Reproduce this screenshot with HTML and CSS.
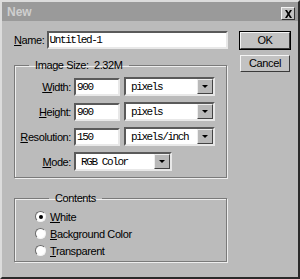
FILE: index.html
```html
<!DOCTYPE html>
<html lang="en">
<head>
    <meta charset="UTF-8">
    <title>New</title>
    <link rel="stylesheet" href="styles.css">
</head>
<body>
    <div class="dialog">
        <div class="titlebar">
            <span class="title">New</span>
            <span class="close">
                <svg width="9" height="8" viewBox="0 0 9 8"><path d="M1 0h2l1.5 2.5L6 0h2L5.5 4 8 8H6L4.5 5.5 3 8H1l2.5-4z" fill="#000"/></svg>
            </span>
        </div>
        <div class="body">
            <div class="main">
                <div class="row name-row">
                    <label class="lbl"><u>N</u>ame:</label>
                    <div class="field name-field">Untitled-1</div>
                </div>
                <fieldset class="group size-group">
                    <legend>Image Size:&nbsp; 2.32M</legend>
                    <div class="row">
                        <label class="lbl right"><u>W</u>idth:</label>
                        <div class="field num">900</div>
                        <div class="select unit"><span>pixels</span><i class="arrow"></i></div>
                    </div>
                    <div class="row">
                        <label class="lbl right"><u>H</u>eight:</label>
                        <div class="field num">900</div>
                        <div class="select unit"><span>pixels</span><i class="arrow"></i></div>
                    </div>
                    <div class="row">
                        <label class="lbl right"><u>R</u>esolution:</label>
                        <div class="field num">150</div>
                        <div class="select unit"><span>pixels/inch</span><i class="arrow"></i></div>
                    </div>
                    <div class="row">
                        <label class="lbl right"><u>M</u>ode:</label>
                        <div class="select mode"><span>RGB Color</span><i class="arrow"></i></div>
                    </div>
                </fieldset>
                <fieldset class="group contents-group">
                    <legend>Contents</legend>
                    <div class="radio"><i class="dot checked"></i><span><u>W</u>hite</span></div>
                    <div class="radio"><i class="dot"></i><span><u>B</u>ackground Color</span></div>
                    <div class="radio"><i class="dot"></i><span><u>T</u>ransparent</span></div>
                </fieldset>
            </div>
            <div class="buttons">
                <div class="btn default">OK</div>
                <div class="btn">Cancel</div>
            </div>
        </div>
    </div>
</body>
</html>
```
FILE: styles.css
```css
body {
    margin: 0;
    background: #bbbbbb;
    font-family: "Liberation Sans", Arial, sans-serif;
    font-size: 11px;
    letter-spacing: -0.4px;
    color: #000;
}
.dialog {
    width: 300px;
    height: 279px;
    box-sizing: border-box;
    background: #bbbbbb;
    border: 2px solid;
    border-color: #dcdcdc #2a2a2a #2a2a2a #dcdcdc;
}
.titlebar {
    height: 19px;
    background: #9a9a9a;
    display: flex;
    align-items: center;
    justify-content: space-between;
    padding: 0 3px 0 5px;
}
.title {
    color: #cfcfcf;
    font-weight: bold;
    font-size: 12px;
    letter-spacing: 0;
}
.close {
    width: 14px;
    height: 13px;
    box-sizing: border-box;
    margin-top: 4px;
    background: #c2c2c2;
    border: 1px solid;
    border-color: #f2f2f2 #333 #333 #f2f2f2;
    display: flex;
    align-items: center;
    justify-content: center;
}
.body {
    display: flex;
    padding: 10px 5px 0 10px;
}
.main {
    width: 216px;
}
.row {
    display: flex;
    align-items: center;
    height: 19px;
    margin-bottom: 6px;
}
.name-row {
    height: 18px;
    margin-bottom: 10px;
}
.lbl {
    width: 33px;
    padding-left: 2px;
}
.lbl.right {
    width: 56px;
    text-align: right;
    padding-left: 0;
    padding-right: 3px;
}
.field {
    height: 18px;
    box-sizing: border-box;
    background: #fff;
    border: 2px solid;
    border-color: #5a5a5a #e8e8e8 #e8e8e8 #5a5a5a;
    font-family: "Liberation Mono", "Courier New", monospace;
    font-size: 11px;
    letter-spacing: -1.4px;
    line-height: 14px;
    padding-left: 1px;
}
.name-field {
    width: 184px;
}
.num {
    width: 46px;
    margin-right: 4px;
}
.select {
    height: 19px;
    box-sizing: border-box;
    background: #fff;
    border: 2px solid;
    border-color: #5a5a5a #e8e8e8 #e8e8e8 #5a5a5a;
    display: flex;
    align-items: center;
    justify-content: space-between;
    font-family: "Liberation Mono", "Courier New", monospace;
    font-size: 11px;
    letter-spacing: -1.4px;
    padding-left: 5px;
}
.unit {
    width: 91px;
}
.mode {
    width: 98px;
}
.arrow {
    width: 16px;
    height: 15px;
    box-sizing: border-box;
    background: #b9b9b9;
    border: 1px solid;
    border-color: #eee #444 #444 #eee;
    position: relative;
}
.arrow::after {
    content: "";
    position: absolute;
    left: 4px;
    top: 5px;
    border: 3px solid transparent;
    border-top: 3px solid #000;
}
.group {
    margin: 0 0 0 2px;
    padding: 0;
    border: 1px solid #7a7a7a;
    box-shadow: 1px 1px 0 #eee, inset 1px 1px 0 #eee;
    width: 213px;
    box-sizing: border-box;
}
.group legend {
    margin-left: 14px;
    padding: 0 6px;
}
.size-group {
    height: 119px;
    padding: 6px 0 0 0;
}
.contents-group {
    margin-top: 14px;
    height: 70px;
    padding: 4px 0 0 20px;
}
.radio {
    display: flex;
    align-items: center;
    height: 17px;
}
.dot {
    width: 11px;
    height: 11px;
    box-sizing: border-box;
    border-radius: 50%;
    background: #fff;
    border: 1px solid;
    border-color: #6a6a6a #f4f4f4 #f4f4f4 #6a6a6a;
    margin-right: 4px;
    position: relative;
}
.dot.checked::after {
    content: "";
    position: absolute;
    left: 2.5px;
    top: 2.5px;
    width: 4px;
    height: 4px;
    border-radius: 50%;
    background: #000;
}
.buttons {
    margin-left: 12px;
    padding-top: 1px;
    display: flex;
    flex-direction: column;
    gap: 6px;
}
.btn {
    width: 50px;
    height: 17px;
    box-sizing: border-box;
    background: #c2c2c2;
    border: 1px solid;
    border-color: #f4f4f4 #3a3a3a #3a3a3a #f4f4f4;
    text-align: center;
    line-height: 15px;
}
.btn.default {
    outline: 1px solid #000;
}
```
